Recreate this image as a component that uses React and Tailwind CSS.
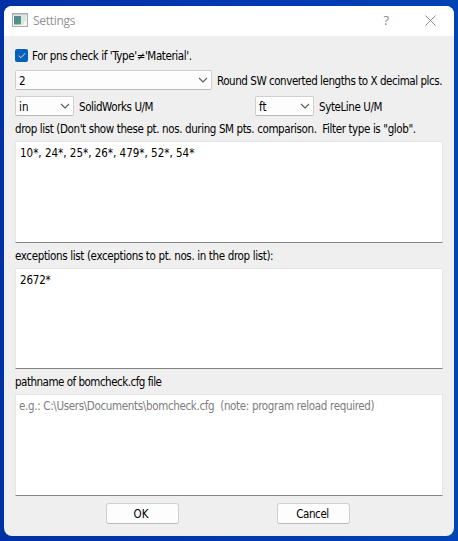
import React from "react";

const Chevron = () => (
  <svg className="mr-[3px] h-[6px] w-[10px] shrink-0" viewBox="0 0 10 6" fill="none" stroke="#5c5c5c" strokeWidth="1.1">
    <path d="M1 1l4 4 4-4" />
  </svg>
);

function Combo({ value, width }) {
  return (
    <div className={`${width} flex h-[20px] shrink-0 items-center justify-between rounded-[2px] border border-[#d0d0d0] border-b-[#b9b9b9] bg-[#fdfdfd] pl-[3px]`}>
      <span className="pt-[3px]">{value}</span>
      <Chevron />
    </div>
  );
}

function Field({ children, className }) {
  return (
    <div className={`${className} w-[428px] border border-[#e6e6e6] border-b-[#858585] bg-white pt-[4px] leading-[15px]`}>
      {children}
    </div>
  );
}

function Button({ children, className }) {
  return (
    <button className={`${className} flex h-[21px] w-[73px] items-center justify-center rounded-[3px] border border-[#d0d0d0] border-b-[#bcbcbc] bg-[#fdfdfd] pt-[2px]`}>
      {children}
    </button>
  );
}

export default function App() {
  return (
    <div className="h-[541px] w-[458px] overflow-hidden bg-linear-to-r from-[#0031a4] via-[#0038b0] to-[#0043b4] pl-[4px] pt-[6px]">
      <div className="h-[530px] w-[450px] overflow-hidden rounded-[8px] bg-[#efefef] font-['DejaVu_Sans_Condensed','DejaVu_Sans',sans-serif] text-[11.5px] [font-stretch:condensed] whitespace-pre text-black">
        <div className="flex h-[30px] items-center bg-white pl-[8px] [font-stretch:normal]">
          <svg className="-mt-[2px] h-[14px] w-[16px]" viewBox="0 0 16 14">
            <defs>
              <linearGradient id="pane" x1="0" y1="0" x2="1" y2="1">
                <stop offset="0" stopColor="#5a83b0" />
                <stop offset="0.5" stopColor="#4d8c8c" />
                <stop offset="1" stopColor="#57a868" />
              </linearGradient>
            </defs>
            <rect x="0.5" y="0.5" width="15" height="13" fill="#f5f5f5" stroke="#a5a9ad" />
            <rect x="1" y="1" width="14" height="1.5" fill="#cbd0d4" />
            <rect x="2" y="3" width="7" height="8.5" fill="url(#pane)" />
            <rect x="9" y="3" width="3" height="8.5" fill="#dde5e4" />
            <rect x="12" y="3" width="2" height="5" fill="#d3ebd8" />
          </svg>
          <span className="ml-[5px] font-['Open_Sans',sans-serif] text-[12px] leading-[16px] tracking-[-0.3px] text-[#929292]">Settings</span>
          <span className="ml-auto mr-[36px] font-['Open_Sans',sans-serif] text-[13px] text-[#8c8c8c]">?</span>
          <svg className="-mt-[2px] mr-[18px] h-[11px] w-[11px]" viewBox="0 0 11 11" stroke="#8c8c8c" strokeWidth="1">
            <path d="M0.5 0.5l10 10M10.5 0.5l-10 10" />
          </svg>
        </div>
        <div className="pl-[11px] pt-[13px]">
          <div className="flex h-[13px] items-center">
            <div className="flex h-[13px] w-[13px] items-center justify-center rounded-[2px] bg-[#0560b8]">
              <svg className="h-[7px] w-[8px]" viewBox="0 0 8 7" fill="none" stroke="#d5e6f6" strokeWidth="1">
                <path d="M0.7 3.5l2.2 2.2L7.3 1.2" />
              </svg>
            </div>
            <span className="ml-[4px] pt-[3px] tracking-[-0.4px]">For pns check if 'Type'≠'Material'.</span>
          </div>
          <div className="mt-[8px] flex h-[20px] items-center gap-[5px]">
            <Combo value="2" width="w-[197px]" />
            <span className="pt-[3px] tracking-[-0.45px]">Round SW converted lengths to X decimal plcs.</span>
          </div>
          <div className="mt-[6px] flex h-[20px] items-center">
            <div className="flex w-[240px] items-center gap-[5px]">
              <Combo value="in" width="w-[59px]" />
              <span className="pt-[3px] tracking-[-0.42px]">SolidWorks U/M</span>
            </div>
            <div className="flex items-center gap-[5px]">
              <Combo value="ft" width="w-[59px]" />
              <span className="pt-[3px] tracking-[-0.4px]">SyteLine U/M</span>
            </div>
          </div>
          <div className="mt-[5px] h-[20px] leading-[17px] tracking-[-0.39px]">drop list (Don't show these pt. nos. during SM pts. comparison.  Filter type is "glob".</div>
          <Field className="h-[102px] pl-[4px]">10*, 24*, 25*, 26*, 479*, 52*, 54*</Field>
          <div className="mt-[5px] h-[20px] leading-[17px] tracking-[-0.36px]">exceptions list (exceptions to pt. nos. in the drop list):</div>
          <Field className="h-[101px] pl-[4px] tracking-[-0.2px]">2672*</Field>
          <div className="mt-[5px] h-[20px] leading-[17px] tracking-[-0.5px]">pathname of bomcheck.cfg file</div>
          <Field className="h-[102px] pl-[3px] text-[#7c7c7c] tracking-[-0.34px]">e.g.: C:\Users\Documents\bomcheck.cfg  (note: program reload required)</Field>
          <div className="ml-[91px] mt-[7px] flex gap-[98px]">
            <Button className="pr-[3px]">OK</Button>
            <Button className="pr-[2px] tracking-[-0.4px]">Cancel</Button>
          </div>
        </div>
      </div>
    </div>
  );
}
